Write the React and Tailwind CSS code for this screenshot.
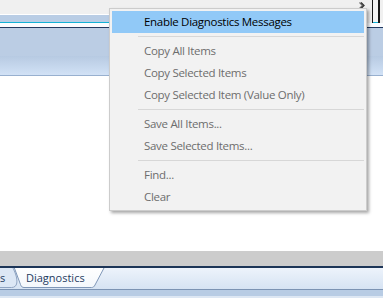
import React from "react";

function Item({ label, active }) {
  return (
    <div
      className={
        active
          ? "h-[22px] flex items-center pl-[32px] bg-[#91c9f7] text-[#000000]"
          : "h-[22px] flex items-center pl-[32px] text-[#6d6d6d]"
      }
    >
      {label}
    </div>
  );
}

function Sep() {
  return (
    <div className="h-[7px] flex items-center pl-[26px]">
      <div className="h-px flex-1 bg-[#d7d7d7]" />
    </div>
  );
}

export default function App() {
  return (
    <div className="relative w-[383px] h-[298px] overflow-hidden bg-white flex flex-col font-['Open_Sans','Noto_Sans',sans-serif] text-[11.5px] tracking-[-0.3px]">
      {/* top strip */}
      <div className="flex h-[23px]">
        <div className="flex-1 flex flex-col">
          <div className="h-[14px] bg-[#f0f0f0] flex justify-end items-start pr-[0px]">
            <svg width="8" height="9" viewBox="0 0 8 9" className="mt-[1px]">
              <path d="M1.5 1.5 L4.5 4.5 L1.5 7.5" fill="none" stroke="#6a6a6a" strokeWidth="1.2" />
              <path d="M3 1.5 L6 4.5 L3 7.5" fill="none" stroke="#333333" strokeWidth="1.3" />
            </svg>
          </div>
          <div className="h-px bg-white" />
          <div className="h-[7px] bg-[#b9cde5]" />
          <div className="h-px bg-[#12b2d6]" />
        </div>
        <div className="w-[6px] bg-[#f0f0f0]" />
        <div className="w-[8px] border-l border-l-[#1a1a1a] border-r-2 border-r-[#1a1a1a] flex flex-col">
          <div className="flex-1 bg-[#f5f5f5]" />
          <div className="h-px bg-[#12b2d6]" />
        </div>
        <div className="w-[3px] bg-[#f0f0f0]" />
      </div>
      <div className="h-[4px] bg-[#fafcff]" />
      <div className="h-px bg-[#22395f]" />
      <div className="h-[28px] bg-[#bbcde4]" />
      <div className="h-[19px] bg-gradient-to-b from-[#b7cae2] to-[#d2e2f6]" />
      <div className="h-px bg-[#98b0cf]" />
      {/* content */}
      <div className="flex-1 bg-white" />
      <div className="h-[15px] bg-[#cccccc]" />
      <div className="h-[2px] bg-[#1d3557]" />
      {/* tab strip */}
      <div className="relative h-[21px] flex items-start text-[#1e3a5f] text-[11px] tracking-normal">
        <svg className="absolute inset-0" width="383" height="21" viewBox="0 0 383 21">
          <defs>
            <linearGradient id="sg" x1="0" y1="0" x2="0" y2="1">
              <stop offset="0" stopColor="#edf3fb" />
              <stop offset="1" stopColor="#d6e3f3" />
            </linearGradient>
            <linearGradient id="tg" x1="0" y1="0" x2="0" y2="1">
              <stop offset="0" stopColor="#ffffff" />
              <stop offset="1" stopColor="#f3f7fc" />
            </linearGradient>
          </defs>
          <rect width="383" height="21" fill="url(#sg)" />
          <path
            d="M-1 -1 H12.5 C15 4 17.5 10 16.8 15 C16.3 18 14.5 19.5 11.5 19.5 H-1 Z"
            fill="#dce7f5"
            stroke="#8fa4c2"
          />
          <path
            d="M14 -1 L20.5 16.5 C21.3 18.7 22.3 19.5 24 19.5 H91.5 C93.2 19.5 94.2 18.7 95 17 L104.5 -1 Z"
            fill="url(#tg)"
            stroke="#7f97b8"
          />
        </svg>
        <span className="relative w-[26px] leading-[20px]">s</span>
        <span className="relative leading-[20px]">Diagnostics</span>
      </div>
      <div className="h-px bg-[#7c93b3]" />
      <div className="h-[6px] bg-[#b8cce4]" />
      <div className="h-[2px] bg-[#dde7f3]" />

      {/* context menu overlay */}
      <div className="absolute left-[109px] top-[8px] w-[258px] border border-[#cccccc] bg-[#f2f2f2] p-[2px] shadow-[2px_2px_3px_rgba(0,0,0,0.35)]">
        <Item label="Enable Diagnostics Messages" active />
        <Sep />
        <Item label="Copy All Items" />
        <Item label="Copy Selected Items" />
        <Item label="Copy Selected Item (Value Only)" />
        <Sep />
        <Item label="Save All Items..." />
        <Item label="Save Selected Items..." />
        <Sep />
        <Item label="Find..." />
        <Item label="Clear" />
      </div>
    </div>
  );
}
